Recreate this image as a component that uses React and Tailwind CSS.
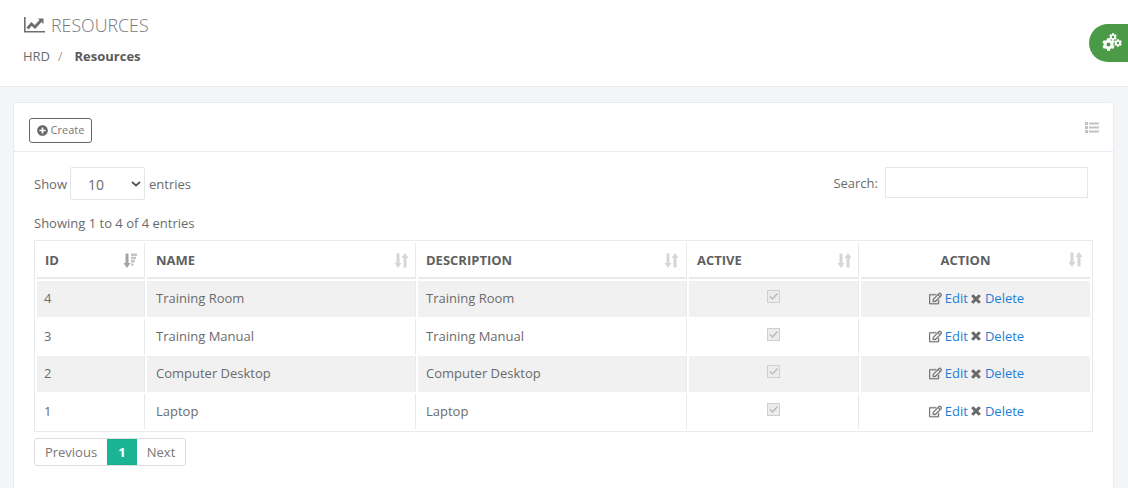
import React from "react";
import { FaCog, FaPlusCircle, FaRegEdit, FaTimes } from "react-icons/fa";

const rows = [
	{ id: 4, name: "Training Room" },
	{ id: 3, name: "Training Manual" },
	{ id: 2, name: "Computer Desktop" },
	{ id: 1, name: "Laptop" },
];

const SortIcon = ({ active }) => (
	<svg width="14" height="15" viewBox="0 0 14 15" className="text-[#d6d6d6]" fill="currentColor">
		<path d="M2.500 0.500h3v9.500h2L4 15 .5 10h2z" fill={active ? "#a3a3a3" : "currentColor"} />
		{active ? (
			<path d="M8 .5h6v2.400H8zM8 3.800h5v2.400H8zM8 7.100h3.800v2.400H8zM8 10.400h2.400v2.400H8z" fill="#c4c4c4" />
		) : (
			<path d="M9.500 14.500V5h-2L11 0l3.500 5h-2v9.500z" />
		)}
	</svg>
);

const DisabledCheck = () => (
	<span className="relative -top-[2px] inline-flex h-[13px] w-[13px] items-center justify-center border border-[#cfcfcf] bg-[#ececec] align-[-1px]">
		<svg width="11" height="11" viewBox="0 0 11 11" fill="none" stroke="#b4b4b4" strokeWidth="1.200">
			<path d="M2 5.500l2.500 2.500L9.500 2.500" />
		</svg>
	</span>
);

const App = () => {
	return (
		<div className="h-[488px] overflow-hidden bg-[#f3f5f9] font-['Open_Sans',sans-serif] text-[13px] text-[#6b6b6b]">
			{/* Page title */}
			<div className="relative h-[87px] border-b border-[#e8ebf0] bg-white pt-3 pl-[23px]">
				<div className="flex items-center gap-[6px] text-[#777]">
					<svg width="22" height="16" viewBox="0 0 22 16" fill="none" stroke="#6f6f6f">
						<path d="M1.800 0v14.800H22" strokeWidth="1.600" />
						<path d="M4.500 11.500l4-4.500 3.500 3 6-6.500" strokeWidth="2.800" />
						<path d="M15 1.500h5.500V7z" fill="#6f6f6f" stroke="none" />
					</svg>
					<h1 className="text-[17.800px] leading-[26px] font-light">RESOURCES</h1>
				</div>
				<div className="mt-[5px] flex text-[13px] leading-[26px]">
					<span>HRD</span>
					<span className="ml-[8px] font-light">/</span>
					<span className="ml-3 font-bold text-[#5a5a5a]">Resources</span>
				</div>
				<div className="absolute top-6 right-0 h-[38px] w-[39px] rounded-l-[19px] bg-[#4a9a48] text-white">
					<FaCog size={13} className="absolute top-[14px] left-[13px]" />
					<FaCog size={8} className="absolute top-[9px] left-[20px]" />
					<FaCog size={8} className="absolute top-[15px] left-[25px]" />
				</div>
			</div>

			{/* Card */}
			<div className="mt-[15px] mr-[14px] ml-[13px] rounded-t-[3px] border border-[#e8ebf0] bg-white">
				<div className="flex h-[49px] items-start justify-between border-b border-[#e8ebf0] pt-[15px] pr-[14px] pl-[15px]">
					<button className="flex h-[25px] w-[63px] items-center justify-center gap-[3px] rounded-[3px] border border-[#666] text-[11px] text-[#777]">
						<FaPlusCircle size={11} className="text-[#666]" />
						Create
					</button>
					<svg width="14" height="11" viewBox="0 0 14 11" fill="#c2c2c2" className="mt-1">
						<path d="M0 0h3v3H0zM4 .5h10v2H4zM0 4h3v3H0zM4 4.500h10v2H4zM0 8h3v3H0zM4 8.500h10v2H4z" />
					</svg>
				</div>

				<div className="px-5 pt-[15px]">
					<div className="flex items-start justify-between pr-[5px]">
						<div className="flex items-center">
							<span className="pt-[3px]">Show</span>
							<div className="mr-1 ml-[3px] flex h-[33px] w-[75px] items-center justify-between rounded-[2px] border border-[#e5e6e7] pr-[3px] pl-[17px] text-[14px]">
								<span className="pt-[2px]">10</span>
								<svg width="10" height="6" viewBox="0 0 10 6" fill="none" stroke="#555" strokeWidth="1.700">
									<path d="M1 1l4 3.500L9 1" />
								</svg>
							</div>
							<span className="pt-[3px]">entries</span>
						</div>
						<div className="flex items-center gap-[7px]">
							<span className="pt-[2px]">Search:</span>
							<input className="h-[31px] w-[203px] border border-[#e5e6e7]" />
						</div>
					</div>

					<div className="mt-[14px] leading-[18px]">Showing 1 to 4 of 4 entries</div>

					<table className="mt-2 w-[1059px] table-fixed border-separate border-spacing-[2px] border border-[#e7eaec] text-[13px]">
						<thead>
							<tr className="h-[36px] text-left font-bold text-[#5f5f5f]">
								<th className="w-[108px] border-r border-b-2 border-[#e7eaec] pt-[1px] pl-2">
									<div className="flex items-center justify-between pr-[7px]">ID<SortIcon active /></div>
								</th>
								<th className="w-[269px] border-r border-b-2 border-[#e7eaec] pt-[1px] pl-[9px]">
									<div className="flex items-center justify-between pr-[7px]">NAME<SortIcon /></div>
								</th>
								<th className="w-[269px] border-r border-b-2 border-[#e7eaec] pt-[1px] pl-2">
									<div className="flex items-center justify-between pr-2">DESCRIPTION<SortIcon /></div>
								</th>
								<th className="w-[170px] border-r border-b-2 border-[#e7eaec] pt-[1px] pl-2">
									<div className="flex items-center justify-between pr-[7px]">ACTIVE<SortIcon /></div>
								</th>
								<th className="border-b-2 border-[#e7eaec] pt-[1px]">
									<div className="relative pr-5 text-center">
										ACTION
										<span className="absolute top-[1px] right-[8px]"><SortIcon /></span>
									</div>
								</th>
							</tr>
						</thead>
						<tbody>
							{rows.map((row, i) => {
								const shade = i % 2 === 0 ? "bg-[#f1f1f1]" : "";
								return (
									<tr key={row.id} className="h-[35.600px]">
										<td className={`${shade} border-r border-[#e7eaec] pl-[7px]`}>{row.id}</td>
										<td className={`${shade} border-r border-[#e7eaec] pl-[9px]`}>{row.name}</td>
										<td className={`${shade} border-r border-[#e7eaec] pl-2`}>{row.name}</td>
										<td className={`${shade} border-r border-[#e7eaec] text-center`}>
											<DisabledCheck />
										</td>
										<td className={`${shade} pt-[2px] text-center`}>
											<span className="inline-flex items-center justify-center gap-[3px] pl-[2px]">
												<FaRegEdit size={13} stroke="currentColor" strokeWidth={12} className="text-[#777]" />
												<a className="text-[#1c7fd6]">Edit</a>
												<FaTimes size={12} stroke="currentColor" strokeWidth={40} className="-ml-[1px] text-[#666]" />
												<a className="text-[#1c7fd6]">Delete</a>
											</span>
										</td>
									</tr>
								);
							})}
						</tbody>
					</table>

					<div className="mt-[6px] flex h-[28px] w-[152px] overflow-hidden rounded-[3px] border border-[#dddddd] text-[#777]">
						<span className="flex w-[72px] items-center justify-center">Previous</span>
						<span className="flex w-[30px] items-center justify-center bg-[#1ab394] font-bold text-white">1</span>
						<span className="flex flex-1 items-center justify-center">Next</span>
					</div>
					<div className="h-10" />
				</div>
			</div>
		</div>
	);
};

export default App;
